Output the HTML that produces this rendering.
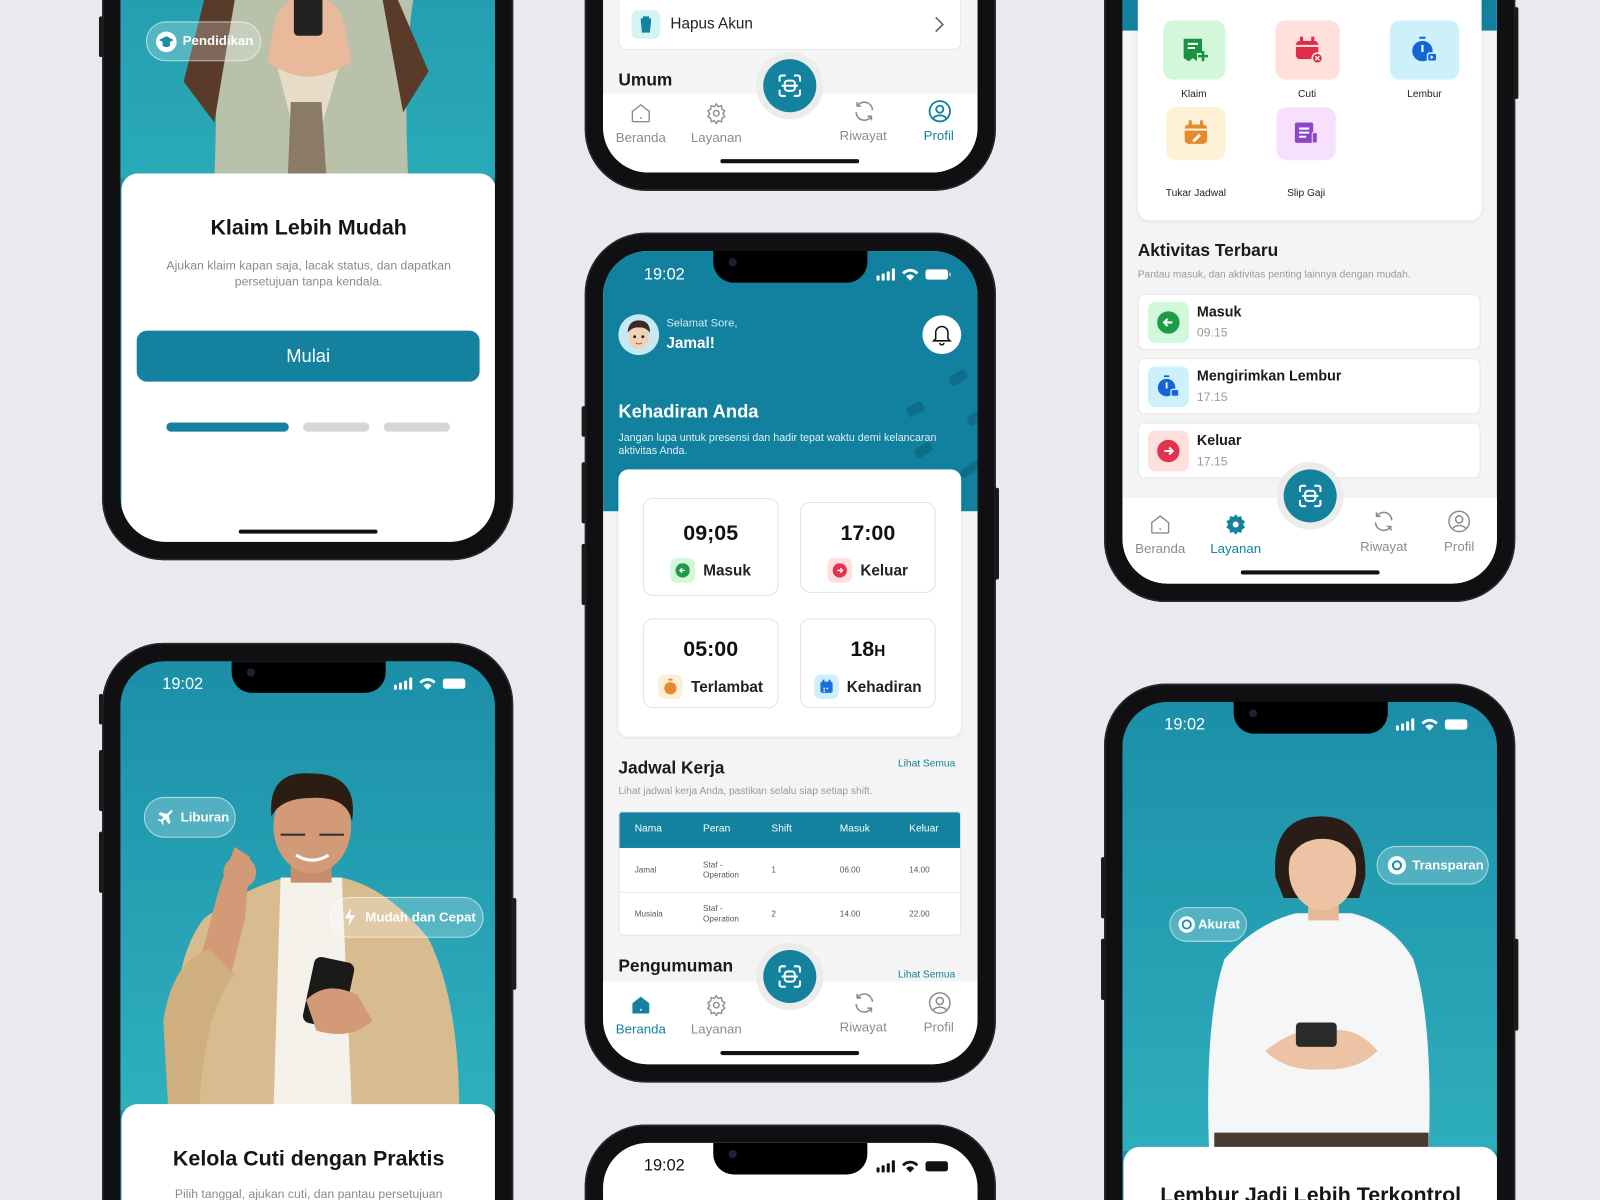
<!DOCTYPE html>
<html><head><meta charset="utf-8"><style>
*{margin:0;padding:0;box-sizing:border-box}
html,body{width:1600px;height:1200px;overflow:hidden;background:#e9eaed;font-family:"Liberation Sans",sans-serif}
#o{position:absolute;left:0;top:0;width:1600px;height:1200px;overflow:hidden}
#w{position:absolute;left:0;top:0;width:1568px;height:1176px;transform:scale(1.0204);transform-origin:0 0;overflow:hidden}
.ph{position:absolute;width:403px;height:833px;border-radius:60px;background:#101012;box-shadow:0 0 0 1.5px #2a2a2e inset}
.sc{position:absolute;left:18px;top:18px;width:367px;height:797px;border-radius:44px;overflow:hidden}
.g{position:absolute;width:1568px;height:1176px}
.a{position:absolute;white-space:nowrap}
.btn{position:absolute;width:4px;background:#1a1a1c;border-radius:2px}
.notch{position:absolute;height:31px;background:#000;border-radius:0 0 20px 20px}
.pill{position:absolute;border-radius:22px;background:rgba(255,255,255,.22);border:1.5px solid rgba(255,255,255,.55);color:#fff;font-weight:bold;font-size:13px}
.nav{position:absolute;font-size:13px;color:#8c8c8c;text-align:center;width:80px}
.fab{position:absolute;width:52px;height:52px;border-radius:50%;background:#14819f;box-shadow:0 0 0 7px #ececec}
.box{position:absolute;border:1px solid #e2e2e2;border-radius:10px;background:#fff;text-align:center}
.bt{font-weight:bold;font-size:21px;color:#111;margin-top:22px}
.bl{font-weight:bold;font-size:15px;color:#222;margin-top:12px;display:flex;align-items:center;justify-content:center;gap:8px}
.ic{width:24px;height:24px;border-radius:6px;display:inline-flex;align-items:center;justify-content:center}
.sq{position:absolute;border-radius:10px;display:flex;align-items:center;justify-content:center}
.lbl{position:absolute;font-size:10px;color:#222;text-align:center;width:100px}
.act{position:absolute;left:1115px;width:336px;height:55px;background:#fff;border:1px solid #e6e6e6;border-radius:7px}
.act .i{position:absolute;left:9px;top:7px;width:40px;height:40px;border-radius:7px;display:flex;align-items:center;justify-content:center}
.act .t1{position:absolute;left:57px;top:8px;font-weight:bold;font-size:14px;color:#1a1a1a}
.act .t2{position:absolute;left:57px;top:30px;font-size:12px;color:#9a9a9a}
</style></head><body><div id="o"><div id="w">

<!-- ============ PHONE 1 ============ -->
<div class="ph" style="left:100px;top:-284px"><div class="btn" style="left:-3px;top:300px;height:40px"></div><div class="sc" style="background:#1f98ab">
<div class="g" style="left:-118px;top:266px">
<svg class="a" style="left:118px;top:-266px" width="367" height="440" viewBox="118 -266 367 440">
<defs><linearGradient id="t1" x1="0" y1="0" x2="0" y2="1"><stop offset="0" stop-color="#1a8ea6"/><stop offset="1" stop-color="#2aaab8"/></linearGradient></defs>
<rect x="118" y="-266" width="367" height="440" fill="url(#t1)"/>
<path d="M205 0 Q215 60 210 175 L400 175 Q395 60 405 0Z" fill="#b9c1ab"/>
<path d="M265 40 L300 175 L340 40Z" fill="#e6dcc8"/>
<path d="M285 100 L315 100 L320 175 L282 175Z" fill="#8b7a66"/>
<path d="M200 0 L180 80 L210 120 L230 0Z" fill="#5a3b2a"/>
<path d="M390 0 L420 70 L395 110 L375 0Z" fill="#5a3b2a"/>
<ellipse cx="303" cy="30" rx="35" ry="35" fill="#e8b99a"/>
<rect x="288" y="-5" width="28" height="40" rx="4" fill="#222"/>
<path d="M268 30 Q300 70 338 30 L345 60 Q300 90 262 60Z" fill="#e8b99a"/>
</svg>
<div class="pill" style="left:143px;top:21px;width:113px;height:39px;line-height:36px;padding-left:35px">Pendidikan
<svg style="position:absolute;left:8px;top:8px" width="22" height="22" viewBox="0 0 24 24"><circle cx="12" cy="12" r="11" fill="#fff"/><path d="M4 10l8-4 8 4-8 4z M8 12v4c2 2 6 2 8 0v-4l-4 2z" fill="#1a8ea6"/></svg></div>
<div class="a" style="left:119px;top:170px;width:367px;height:400px;background:#fff;border-radius:16px 16px 0 0"></div>
<div class="a" style="left:119px;top:212px;width:367px;text-align:center;font-size:21px;font-weight:bold;color:#151515">Klaim Lebih Mudah</div>
<div class="a" style="left:140px;top:252px;width:325px;text-align:center;font-size:12px;line-height:16px;color:#8a8a8a;white-space:normal">Ajukan klaim kapan saja, lacak status, dan dapatkan persetujuan tanpa kendala.</div>
<div class="a" style="left:134px;top:324px;width:336px;height:50px;border-radius:10px;background:#14819f;color:#fff;font-size:18px;line-height:50px;text-align:center">Mulai</div>
<div class="a" style="left:163px;top:414px;width:120px;height:9px;border-radius:5px;background:#14819f"></div>
<div class="a" style="left:297px;top:414px;width:65px;height:9px;border-radius:5px;background:#d6d6d6"></div>
<div class="a" style="left:376px;top:414px;width:65px;height:9px;border-radius:5px;background:#d6d6d6"></div>
<div class="a" style="left:234px;top:519px;width:136px;height:4px;border-radius:2px;background:#111"></div>
</div></div></div>

<!-- ============ PHONE 2 ============ -->
<div class="ph" style="left:573px;top:-646px"><div class="sc" style="background:#f5f5f6">
<div class="g" style="left:-591px;top:628px">
<div class="a" style="left:606px;top:-10px;width:336px;height:59px;background:#fff;border:1px solid #e5e5e5;border-radius:8px"></div>
<div class="a" style="left:619px;top:10px;width:28px;height:28px;border-radius:6px;background:#d3f3f5"><svg width="28" height="28" viewBox="0 0 28 28"><path d="M9 9h10M12 9V7h4v2M10 11h8l-1 10h-6z" stroke="#14819f" stroke-width="2" fill="#14819f"/></svg></div>
<div class="a" style="left:657px;top:15px;font-size:15px;color:#222">Hapus Akun</div>
<svg class="a" style="left:912px;top:14px" width="16" height="20" viewBox="0 0 16 20"><path d="M5 3l7 7-7 7" stroke="#666" stroke-width="1.6" fill="none"/></svg>
<div class="a" style="left:606px;top:69px;font-size:17px;font-weight:bold;color:#1a1a1a">Umum</div>
<div class="a" style="left:591px;top:92px;width:367px;height:100px;background:#fff"></div>
<div class="fab" style="left:748px;top:58px"></div>
<svg class="a" style="left:761px;top:71px" width="26" height="26" viewBox="0 0 26 26" fill="none" stroke="#fff" stroke-width="2"><path d="M3 9V5a2 2 0 0 1 2-2h4M17 3h4a2 2 0 0 1 2 2v4M23 17v4a2 2 0 0 1-2 2h-4M9 23H5a2 2 0 0 1-2-2v-4"/><rect x="8" y="8" width="10" height="10" rx="3"/><path d="M5 13h16"/></svg>
<svg class="a" style="left:617px;top:100px" width="22" height="22" viewBox="0 0 24 24" fill="none" stroke="#8c8c8c" stroke-width="1.5"><path d="M3 10l9-7 9 7v10a1 1 0 0 1-1 1H4a1 1 0 0 1-1-1z"/><path d="M12 16v2"/></svg>
<div class="nav" style="left:588px;top:127px">Beranda</div>
<svg class="a" style="left:691px;top:100px" width="22" height="22" viewBox="0 0 24 24" fill="none" stroke="#8c8c8c" stroke-width="1.5"><circle cx="12" cy="12" r="3"/><path d="M12 2l2 3 3.5-1 .5 3.5 3 2-2 3 2 3-3 2-.5 3.5-3.5-1-2 3-2-3-3.5 1-.5-3.5-3-2 2-3-2-3 3-2 .5-3.5 3.5 1z"/></svg>
<div class="nav" style="left:662px;top:127px">Layanan</div>
<svg class="a" style="left:835px;top:97px" width="24" height="24" viewBox="0 0 24 24" fill="none" stroke="#8c8c8c" stroke-width="1.5"><path d="M20 11a8 8 0 0 0-14.5-4.5M4 13a8 8 0 0 0 14.5 4.5M5 3v4h4M19 21v-4h-4"/></svg>
<div class="nav" style="left:806px;top:125px">Riwayat</div>
<svg class="a" style="left:909px;top:97px" width="24" height="24" viewBox="0 0 24 24" fill="none" stroke="#14819f" stroke-width="1.8"><circle cx="12" cy="12" r="10"/><circle cx="12" cy="10" r="3.5"/><path d="M5.5 19c3-4 10-4 13 0"/></svg>
<div class="nav" style="left:880px;top:125px;color:#14819f">Profil</div>
<div class="a" style="left:706px;top:156px;width:136px;height:4px;border-radius:2px;background:#111"></div>
</div></div></div>

<!-- ============ PHONE 3 ============ -->
<div class="ph" style="left:573px;top:228px"><div class="btn" style="left:-3px;top:170px;height:30px"></div><div class="btn" style="left:-3px;top:225px;height:60px"></div><div class="btn" style="left:-3px;top:305px;height:60px"></div><div class="btn" style="right:-3px;top:250px;height:90px"></div>
<div class="sc" style="background:#f4f4f5">
<div class="g" style="left:-591px;top:-246px">
<div class="a" style="left:591px;top:246px;width:367px;height:255px;background:#12809f"></div>
<div class="a" style="left:930px;top:365px;width:18px;height:10px;border-radius:3px;background:#0e6d89;transform:rotate(-30deg)"></div>
<div class="a" style="left:888px;top:396px;width:18px;height:10px;border-radius:3px;background:#0e6d89;transform:rotate(-30deg)"></div>
<div class="a" style="left:948px;top:404px;width:18px;height:10px;border-radius:3px;background:#0e6d89;transform:rotate(-30deg)"></div>
<div class="a" style="left:896px;top:436px;width:18px;height:10px;border-radius:3px;background:#0e6d89;transform:rotate(-30deg)"></div>
<div class="a" style="left:940px;top:455px;width:24px;height:8px;border-radius:3px;background:#0e6d89;transform:rotate(-35deg)"></div>
<div class="notch" style="left:699px;top:246px;width:151px"></div>
<div class="a" style="left:714px;top:253px;width:8px;height:8px;border-radius:50%;background:#1b2233"></div>
<div class="a" style="left:631px;top:261px;font-size:16px;color:#fff">19:02</div>
<svg class="a" style="left:859px;top:262px" width="75" height="14" viewBox="0 0 75 14"><g fill="#fff"><rect x="0" y="8" width="3" height="5" rx="1"/><rect x="5" y="6" width="3" height="7" rx="1"/><rect x="10" y="4" width="3" height="9" rx="1"/><rect x="15" y="1" width="3" height="12" rx="1"/><path d="M25 5a11 11 0 0 1 16 0l-2 2a8 8 0 0 0-12 0zM29 9a5 5 0 0 1 8 0l-4 4z"/><rect x="48" y="2" width="22" height="10" rx="2.5"/><rect x="71" y="5" width="2" height="4" rx="1" opacity=".5"/></g></svg>
<div class="a" style="left:606px;top:308px;width:40px;height:40px;border-radius:50%;background:#c6e9f6"></div>
<svg class="a" style="left:612px;top:312px" width="28" height="34" viewBox="0 0 28 34"><ellipse cx="14" cy="18" rx="10" ry="12" fill="#f1d2b6"/><path d="M3 14Q4 2 14 2Q25 2 25 14Q20 8 14 9Q8 8 3 14" fill="#3a2a22"/><circle cx="10" cy="18" r="1.4" fill="#222"/><circle cx="18" cy="18" r="1.4" fill="#222"/><path d="M11 24q3 2 6 0" stroke="#a55" fill="none"/></svg>
<div class="a" style="left:653px;top:311px;font-size:11px;color:#d4ecf2">Selamat Sore,</div>
<div class="a" style="left:653px;top:328px;font-size:15px;font-weight:bold;color:#fff">Jamal!</div>
<div class="a" style="left:904px;top:309px;width:38px;height:38px;border-radius:50%;background:#fff"></div>
<svg class="a" style="left:913px;top:317px" width="20" height="22" viewBox="0 0 20 22" fill="none" stroke="#111" stroke-width="1.5"><path d="M4 15V9a6 6 0 0 1 12 0v6l2 2H2z"/><path d="M8 19a2 2 0 0 0 4 0"/></svg>
<div class="a" style="left:606px;top:393px;font-size:18px;font-weight:bold;color:#fff">Kehadiran Anda</div>
<div class="a" style="left:606px;top:423px;width:340px;font-size:10.5px;line-height:13px;color:#e3f1f5;white-space:normal">Jangan lupa untuk presensi dan hadir tepat waktu demi kelancaran aktivitas Anda.</div>
<div class="a" style="left:606px;top:460px;width:336px;height:262px;border-radius:10px;background:#fff;box-shadow:0 1px 3px rgba(0,0,0,.08)"></div>
<div class="box" style="left:630px;top:488px;width:133px;height:96px"><div class="bt">09;05</div><div class="bl"><span class="ic" style="background:#d3f7d9"><svg width="14" height="14" viewBox="0 0 14 14"><circle cx="7" cy="7" r="7" fill="#1c9b48"/><path d="M9.5 7h-5M6.5 4.8L4.3 7l2.2 2.2" stroke="#fff" stroke-width="1.3" fill="none"/></svg></span>Masuk</div></div>
<div class="box" style="left:784px;top:492px;width:133px;height:89px"><div class="bt" style="margin-top:18px">17:00</div><div class="bl"><span class="ic" style="background:#fde0dc"><svg width="14" height="14" viewBox="0 0 14 14"><circle cx="7" cy="7" r="7" fill="#e1324e"/><path d="M4.5 7h5M7.5 4.8L9.7 7 7.5 9.2" stroke="#fff" stroke-width="1.3" fill="none"/></svg></span>Keluar</div></div>
<div class="box" style="left:630px;top:606px;width:133px;height:88px"><div class="bt" style="margin-top:18px">05:00</div><div class="bl"><span class="ic" style="background:#fdefd6"><svg width="14" height="16" viewBox="0 0 14 16"><rect x="5" y="0" width="4" height="2" fill="#e48a2f"/><circle cx="7" cy="9.5" r="6" fill="#e48a2f"/></svg></span>Terlambat</div></div>
<div class="box" style="left:784px;top:606px;width:133px;height:88px"><div class="bt" style="margin-top:18px">18<span style="font-size:15px">H</span></div><div class="bl"><span class="ic" style="background:#cdeffc"><svg width="14" height="14" viewBox="0 0 14 14"><rect x="1" y="2" width="12" height="11" rx="2" fill="#1d6fde"/><rect x="3" y="0" width="2" height="4" fill="#1d6fde"/><rect x="9" y="0" width="2" height="4" fill="#1d6fde"/><rect x="4" y="8" width="1.5" height="1.5" fill="#fff"/><rect x="4" y="10.5" width="1.5" height="1.5" fill="#fff"/><rect x="7" y="8" width="1.5" height="1.5" fill="#fff"/></svg></span>Kehadiran</div></div>
<div class="a" style="left:606px;top:743px;font-size:17px;font-weight:bold;color:#1a1a1a">Jadwal Kerja</div>
<div class="a" style="left:880px;top:743px;font-size:10px;color:#14819f">Lihat Semua</div>
<div class="a" style="left:606px;top:770px;font-size:10px;color:#9a9a9a">Lihat jadwal kerja Anda, pastikan selalu siap setiap shift.</div>
<div class="a" style="left:606px;top:795px;width:336px;height:122px;background:#fff;border:1px solid #e3e3e3;border-radius:4px;overflow:hidden">
<div style="height:35px;background:#14819f"></div>
<div style="position:absolute;top:78px;left:0;right:0;border-top:1px solid #ececec"></div></div>
<div class="a" style="left:622px;top:807px;font-size:10px;color:#fff">Nama</div>
<div class="a" style="left:689px;top:807px;font-size:10px;color:#fff">Peran</div>
<div class="a" style="left:756px;top:807px;font-size:10px;color:#fff">Shift</div>
<div class="a" style="left:823px;top:807px;font-size:10px;color:#fff">Masuk</div>
<div class="a" style="left:891px;top:807px;font-size:10px;color:#fff">Keluar</div>
<div class="a" style="left:622px;top:848px;font-size:8px;color:#555">Jamal</div>
<div class="a" style="left:689px;top:843px;font-size:8px;line-height:10px;color:#555">Staf -<br>Operation</div>
<div class="a" style="left:756px;top:848px;font-size:8px;color:#555">1</div>
<div class="a" style="left:823px;top:848px;font-size:8px;color:#555">06.00</div>
<div class="a" style="left:891px;top:848px;font-size:8px;color:#555">14.00</div>
<div class="a" style="left:622px;top:891px;font-size:8px;color:#555">Musiala</div>
<div class="a" style="left:689px;top:886px;font-size:8px;line-height:10px;color:#555">Staf -<br>Operation</div>
<div class="a" style="left:756px;top:891px;font-size:8px;color:#555">2</div>
<div class="a" style="left:823px;top:891px;font-size:8px;color:#555">14.00</div>
<div class="a" style="left:891px;top:891px;font-size:8px;color:#555">22.00</div>
<div class="a" style="left:606px;top:937px;font-size:17px;font-weight:bold;color:#1a1a1a">Pengumuman</div>
<div class="a" style="left:880px;top:950px;font-size:10px;color:#14819f">Lihat Semua</div>
<div class="a" style="left:591px;top:962px;width:367px;height:100px;background:#fff"></div>
<div class="fab" style="left:748px;top:931px"></div>
<svg class="a" style="left:761px;top:944px" width="26" height="26" viewBox="0 0 26 26" fill="none" stroke="#fff" stroke-width="2"><path d="M3 9V5a2 2 0 0 1 2-2h4M17 3h4a2 2 0 0 1 2 2v4M23 17v4a2 2 0 0 1-2 2h-4M9 23H5a2 2 0 0 1-2-2v-4"/><rect x="8" y="8" width="10" height="10" rx="3"/><path d="M5 13h16"/></svg>
<svg class="a" style="left:617px;top:974px" width="22" height="22" viewBox="0 0 24 24"><path d="M3 10l9-7 9 7v10a1 1 0 0 1-1 1H4a1 1 0 0 1-1-1z" fill="#14819f"/><path d="M12 16v2" stroke="#fff" stroke-width="1.5"/></svg>
<div class="nav" style="left:588px;top:1001px;color:#14819f">Beranda</div>
<svg class="a" style="left:691px;top:974px" width="22" height="22" viewBox="0 0 24 24" fill="none" stroke="#8c8c8c" stroke-width="1.5"><circle cx="12" cy="12" r="3"/><path d="M12 2l2 3 3.5-1 .5 3.5 3 2-2 3 2 3-3 2-.5 3.5-3.5-1-2 3-2-3-3.5 1-.5-3.5-3-2 2-3-2-3 3-2 .5-3.5 3.5 1z"/></svg>
<div class="nav" style="left:662px;top:1001px">Layanan</div>
<svg class="a" style="left:835px;top:971px" width="24" height="24" viewBox="0 0 24 24" fill="none" stroke="#8c8c8c" stroke-width="1.5"><path d="M20 11a8 8 0 0 0-14.5-4.5M4 13a8 8 0 0 0 14.5 4.5M5 3v4h4M19 21v-4h-4"/></svg>
<div class="nav" style="left:806px;top:999px">Riwayat</div>
<svg class="a" style="left:909px;top:971px" width="24" height="24" viewBox="0 0 24 24" fill="none" stroke="#8c8c8c" stroke-width="1.5"><circle cx="12" cy="12" r="10"/><circle cx="12" cy="10" r="3.5"/><path d="M5.5 19c3-4 10-4 13 0"/></svg>
<div class="nav" style="left:880px;top:999px">Profil</div>
<div class="a" style="left:706px;top:1030px;width:136px;height:4px;border-radius:2px;background:#111"></div>
</div></div></div>

<!-- ============ PHONE 4 ============ -->
<div class="ph" style="left:573px;top:1102px"><div class="sc" style="background:#fff">
<div class="g" style="left:-591px;top:-1120px">
<div class="notch" style="left:699px;top:1120px;width:151px"></div>
<div class="a" style="left:714px;top:1127px;width:8px;height:8px;border-radius:50%;background:#1b2233"></div>
<div class="a" style="left:631px;top:1134px;font-size:16px;color:#111">19:02</div>
<svg class="a" style="left:859px;top:1136px" width="75" height="14" viewBox="0 0 75 14"><g fill="#111"><rect x="0" y="8" width="3" height="5" rx="1"/><rect x="5" y="6" width="3" height="7" rx="1"/><rect x="10" y="4" width="3" height="9" rx="1"/><rect x="15" y="1" width="3" height="12" rx="1"/><path d="M25 5a11 11 0 0 1 16 0l-2 2a8 8 0 0 0-12 0zM29 9a5 5 0 0 1 8 0l-4 4z"/><rect x="48" y="2" width="22" height="10" rx="2.5"/></g></svg>
</div></div></div>

<!-- ============ PHONE 5 ============ -->
<div class="ph" style="left:1082px;top:-243px"><div class="btn" style="right:-3px;top:250px;height:90px"></div><div class="sc" style="background:#f4f4f5">
<div class="g" style="left:-1100px;top:225px">
<div class="a" style="left:1100px;top:-225px;width:367px;height:255px;background:#12809f"></div>
<div class="a" style="left:1115px;top:-10px;width:337px;height:226px;background:#fff;border-radius:12px;box-shadow:0 1px 4px rgba(0,0,0,.08)"></div>
<div class="sq" style="left:1140px;top:20px;width:61px;height:58px;background:#d3f7d9"><svg width="28" height="28" viewBox="0 0 28 28"><path d="M3 3h18v14l-5 0v8l-4-3-4 3-5-3z" fill="#1b9144"/><path d="M7 8h10M7 12h7" stroke="#fff" stroke-width="2"/><path d="M22 15v10M17 20h10" stroke="#1b9144" stroke-width="2.5"/></svg></div>
<div class="sq" style="left:1250px;top:20px;width:63px;height:58px;background:#fde1da"><svg width="30" height="28" viewBox="0 0 30 28"><rect x="3" y="5" width="22" height="18" rx="4" fill="#dd2d4a"/><rect x="7" y="1" width="3" height="6" fill="#dd2d4a"/><rect x="18" y="1" width="3" height="6" fill="#dd2d4a"/><rect x="3" y="9" width="22" height="2" fill="#fde1da"/><circle cx="24" cy="22" r="5" fill="#dd2d4a" stroke="#fde1da" stroke-width="1.5"/><path d="M22 20l4 4M26 20l-4 4" stroke="#fff" stroke-width="1.3"/></svg></div>
<div class="sq" style="left:1362px;top:20px;width:68px;height:58px;background:#cdf1fb"><svg width="28" height="28" viewBox="0 0 28 28"><rect x="9" y="1" width="6" height="2" fill="#1464d2"/><circle cx="12" cy="15" r="10" fill="#1464d2"/><rect x="11" y="9" width="2" height="7" fill="#fff"/><rect x="17" y="17" width="9" height="8" rx="2" fill="#1464d2" stroke="#cdf1fb" stroke-width="1.5"/><path d="M20 19l3 2-3 2z" fill="#fff"/></svg></div>
<div class="lbl" style="left:1120px;top:87px">Klaim</div>
<div class="lbl" style="left:1231px;top:87px">Cuti</div>
<div class="lbl" style="left:1346px;top:87px">Lembur</div>
<div class="sq" style="left:1143px;top:105px;width:58px;height:52px;background:#fdf0d5"><svg width="28" height="28" viewBox="0 0 28 28"><rect x="3" y="5" width="22" height="19" rx="4" fill="#e48a2f"/><rect x="7" y="1" width="3" height="6" fill="#e48a2f"/><rect x="18" y="1" width="3" height="6" fill="#e48a2f"/><rect x="3" y="9" width="22" height="2" fill="#fdf0d5"/><path d="M11 20l6-6 2 2-6 6h-2z" fill="#fff"/></svg></div>
<div class="sq" style="left:1251px;top:105px;width:58px;height:52px;background:#f6e0fb"><svg width="28" height="28" viewBox="0 0 28 28"><rect x="3" y="3" width="18" height="20" rx="2" fill="#8e45c9"/><path d="M7 9h10M7 13h10M7 17h7" stroke="#fff" stroke-width="2"/><rect x="20" y="13" width="5" height="10" rx="1" fill="#8e45c9" stroke="#f6e0fb"/></svg></div>
<div class="lbl" style="left:1122px;top:184px">Tukar Jadwal</div>
<div class="lbl" style="left:1230px;top:184px">Slip Gaji</div>
<div class="a" style="left:1115px;top:236px;font-size:17px;font-weight:bold;color:#1a1a1a">Aktivitas Terbaru</div>
<div class="a" style="left:1115px;top:264px;font-size:10px;color:#9a9a9a">Pantau masuk, dan aktivitas penting lainnya dengan mudah.</div>
<div class="act" style="top:288px"><div class="i" style="background:#d3f7d9"><svg width="22" height="22" viewBox="0 0 14 14"><circle cx="7" cy="7" r="7" fill="#1c9b48"/><path d="M9.5 7h-5M6.5 4.8L4.3 7l2.2 2.2" stroke="#fff" stroke-width="1.3" fill="none"/></svg></div><div class="t1">Masuk</div><div class="t2">09.15</div></div>
<div class="act" style="top:351px"><div class="i" style="background:#cdf1fb"><svg width="24" height="24" viewBox="0 0 28 28"><rect x="9" y="1" width="6" height="2" fill="#1464d2"/><circle cx="12" cy="15" r="10" fill="#1464d2"/><rect x="11" y="9" width="2" height="7" fill="#fff"/><rect x="17" y="17" width="9" height="8" rx="2" fill="#1464d2" stroke="#cdf1fb" stroke-width="1.5"/></svg></div><div class="t1">Mengirimkan Lembur</div><div class="t2">17.15</div></div>
<div class="act" style="top:414px"><div class="i" style="background:#fde0dc"><svg width="22" height="22" viewBox="0 0 14 14"><circle cx="7" cy="7" r="7" fill="#e1324e"/><path d="M4.5 7h5M7.5 4.8L9.7 7 7.5 9.2" stroke="#fff" stroke-width="1.3" fill="none"/></svg></div><div class="t1">Keluar</div><div class="t2">17.15</div></div>
<div class="a" style="left:1100px;top:488px;width:367px;height:100px;background:#fff"></div>
<div class="fab" style="left:1258px;top:460px"></div>
<svg class="a" style="left:1271px;top:473px" width="26" height="26" viewBox="0 0 26 26" fill="none" stroke="#fff" stroke-width="2"><path d="M3 9V5a2 2 0 0 1 2-2h4M17 3h4a2 2 0 0 1 2 2v4M23 17v4a2 2 0 0 1-2 2h-4M9 23H5a2 2 0 0 1-2-2v-4"/><rect x="8" y="8" width="10" height="10" rx="3"/><path d="M5 13h16"/></svg>
<svg class="a" style="left:1126px;top:503px" width="22" height="22" viewBox="0 0 24 24" fill="none" stroke="#8c8c8c" stroke-width="1.5"><path d="M3 10l9-7 9 7v10a1 1 0 0 1-1 1H4a1 1 0 0 1-1-1z"/><path d="M12 16v2"/></svg>
<div class="nav" style="left:1097px;top:530px">Beranda</div>
<svg class="a" style="left:1200px;top:503px" width="22" height="22" viewBox="0 0 24 24"><path d="M12 1l2.3 3 3.7-1 .7 3.7 3.3 2-2 3.3 2 3.3-3.3 2-.7 3.7-3.7-1L12 23l-2.3-3-3.7 1-.7-3.7-3.3-2 2-3.3-2-3.3 3.3-2 .7-3.7 3.7 1z" fill="#14819f"/><circle cx="12" cy="12" r="3.2" fill="#fff"/></svg>
<div class="nav" style="left:1171px;top:530px;color:#14819f">Layanan</div>
<svg class="a" style="left:1344px;top:499px" width="24" height="24" viewBox="0 0 24 24" fill="none" stroke="#8c8c8c" stroke-width="1.5"><path d="M20 11a8 8 0 0 0-14.5-4.5M4 13a8 8 0 0 0 14.5 4.5M5 3v4h4M19 21v-4h-4"/></svg>
<div class="nav" style="left:1316px;top:528px">Riwayat</div>
<svg class="a" style="left:1418px;top:499px" width="24" height="24" viewBox="0 0 24 24" fill="none" stroke="#8c8c8c" stroke-width="1.5"><circle cx="12" cy="12" r="10"/><circle cx="12" cy="10" r="3.5"/><path d="M5.5 19c3-4 10-4 13 0"/></svg>
<div class="nav" style="left:1390px;top:528px">Profil</div>
<div class="a" style="left:1216px;top:559px;width:136px;height:4px;border-radius:2px;background:#111"></div>
</div></div></div>

<!-- ============ PHONE 6 ============ -->
<div class="ph" style="left:100px;top:630px"><div class="btn" style="left:-3px;top:50px;height:30px"></div><div class="btn" style="left:-3px;top:105px;height:60px"></div><div class="btn" style="left:-3px;top:185px;height:60px"></div><div class="btn" style="right:-3px;top:250px;height:90px"></div>
<div class="sc" style="background:#1d95aa">
<div class="g" style="left:-118px;top:-648px">
<svg class="a" style="left:118px;top:648px" width="367" height="440" viewBox="118 648 367 440">
<defs><linearGradient id="t6" x1="0" y1="0" x2="0" y2="1"><stop offset="0" stop-color="#1b8fa8"/><stop offset="1" stop-color="#2fb0bd"/></linearGradient></defs>
<rect x="118" y="648" width="367" height="440" fill="url(#t6)"/>
<path d="M175 1090 Q160 950 200 900 Q240 870 280 860 L335 860 Q380 870 420 920 Q450 980 450 1090Z" fill="#d9bb90"/>
<path d="M275 860 L335 860 L345 1090 L268 1090Z" fill="#f3f1ea"/>
<rect x="285" y="830" width="40" height="35" fill="#c98d6b"/>
<ellipse cx="306" cy="810" rx="38" ry="46" fill="#d29a76"/>
<path d="M266 800 Q262 755 305 758 Q352 758 345 805 Q340 780 305 782 Q275 782 266 800Z" fill="#2b1c14"/>
<path d="M275 818 h24 M313 818 h24" stroke="#333" stroke-width="2"/>
<path d="M290 838 q16 10 32 0" stroke="#fff" stroke-width="3" fill="none"/>
<path d="M195 945 L215 870 L230 830 L245 840 L240 900 L225 960Z" fill="#d29a76"/>
<circle cx="235" cy="855" r="16" fill="#d29a76"/>
<path d="M160 1000 Q170 940 205 930 L230 955 Q200 990 195 1090 L165 1090Z" fill="#cfae80"/>
<rect x="302" y="940" width="40" height="66" rx="7" fill="#1a1a1a" transform="rotate(12 322 973)"/>
<path d="M300 980 Q320 960 350 975 L365 1000 Q345 1020 310 1010Z" fill="#d29a76"/>
</svg>
<div class="notch" style="left:227px;top:648px;width:151px"></div>
<div class="a" style="left:242px;top:655px;width:8px;height:8px;border-radius:50%;background:#1b2233"></div>
<div class="a" style="left:159px;top:662px;font-size:16px;color:#fff">19:02</div>
<svg class="a" style="left:386px;top:663px" width="75" height="14" viewBox="0 0 75 14"><g fill="#fff"><rect x="0" y="8" width="3" height="5" rx="1"/><rect x="5" y="6" width="3" height="7" rx="1"/><rect x="10" y="4" width="3" height="9" rx="1"/><rect x="15" y="1" width="3" height="12" rx="1"/><path d="M25 5a11 11 0 0 1 16 0l-2 2a8 8 0 0 0-12 0zM29 9a5 5 0 0 1 8 0l-4 4z"/><rect x="48" y="2" width="22" height="10" rx="2.5"/></g></svg>
<div class="pill" style="left:141px;top:781px;width:90px;height:40px;line-height:37px;padding-left:35px">Liburan
<svg style="position:absolute;left:9px;top:9px" width="22" height="20" viewBox="0 0 24 24"><path d="M21 4c-1-1-3 0-4 1l-3 3-8-2-2 2 6 4-3 3-3-1-1 1 4 2 2 4 1-1-1-3 3-3 4 6 2-2-2-8 3-3c1-1 2-3 1-4z" fill="#fff"/></svg></div>
<div class="pill" style="left:323px;top:879px;width:151px;height:40px;line-height:37px;padding-left:34px">Mudah dan Cepat
<svg style="position:absolute;left:12px;top:10px" width="14" height="18" viewBox="0 0 14 18"><path d="M8 0L2 10h5l-2 8 7-11H7z" fill="#fff"/></svg></div>
<div class="a" style="left:119px;top:1082px;width:367px;height:200px;background:#fff;border-radius:16px 16px 0 0"></div>
<div class="a" style="left:119px;top:1124px;width:367px;text-align:center;font-size:21px;font-weight:bold;color:#151515">Kelola Cuti dengan Praktis</div>
<div class="a" style="left:119px;top:1163px;width:367px;text-align:center;font-size:12px;color:#8a8a8a">Pilih tanggal, ajukan cuti, dan pantau persetujuan</div>
</div></div></div>

<!-- ============ PHONE 7 ============ -->
<div class="ph" style="left:1082px;top:670px"><div class="btn" style="left:-3px;top:170px;height:60px"></div><div class="btn" style="left:-3px;top:250px;height:60px"></div><div class="btn" style="right:-3px;top:250px;height:90px"></div>
<div class="sc" style="background:#1d95aa">
<div class="g" style="left:-1100px;top:-688px">
<svg class="a" style="left:1100px;top:688px" width="367" height="440" viewBox="1100 688 367 440">
<defs><linearGradient id="t7" x1="0" y1="0" x2="0" y2="1"><stop offset="0" stop-color="#1b8fa8"/><stop offset="1" stop-color="#2eaebc"/></linearGradient></defs>
<rect x="1100" y="688" width="367" height="440" fill="url(#t7)"/>
<path d="M1185 1130 Q1180 1000 1200 940 Q1230 905 1270 895 L1325 895 Q1365 905 1385 940 Q1405 1000 1400 1130Z" fill="#f5f6f7"/>
<rect x="1282" y="870" width="30" height="32" fill="#e5b998"/>
<path d="M1250 860 Q1245 800 1295 800 Q1340 800 1338 860 L1332 880 L1258 880Z" fill="#2a1d18"/>
<ellipse cx="1296" cy="852" rx="33" ry="40" fill="#ecc4a5"/>
<path d="M1262 845 Q1262 808 1296 810 Q1330 808 1330 845 Q1320 822 1296 822 Q1272 822 1262 845Z" fill="#2a1d18"/>
<path d="M1190 1110 h210 v15 h-210z" fill="#4a3a30"/>
<path d="M1240 1030 Q1270 1005 1300 1010 Q1330 1005 1350 1030 Q1330 1050 1295 1048 Q1260 1050 1240 1030Z" fill="#ecc4a5"/>
<rect x="1270" y="1002" width="40" height="24" rx="4" fill="#2a2a2a"/>
</svg>
<div class="notch" style="left:1209px;top:688px;width:151px"></div>
<div class="a" style="left:1224px;top:695px;width:8px;height:8px;border-radius:50%;background:#1b2233"></div>
<div class="a" style="left:1141px;top:702px;font-size:16px;color:#fff">19:02</div>
<svg class="a" style="left:1368px;top:703px" width="75" height="14" viewBox="0 0 75 14"><g fill="#fff"><rect x="0" y="8" width="3" height="5" rx="1"/><rect x="5" y="6" width="3" height="7" rx="1"/><rect x="10" y="4" width="3" height="9" rx="1"/><rect x="15" y="1" width="3" height="12" rx="1"/><path d="M25 5a11 11 0 0 1 16 0l-2 2a8 8 0 0 0-12 0zM29 9a5 5 0 0 1 8 0l-4 4z"/><rect x="48" y="2" width="22" height="10" rx="2.5"/></g></svg>
<div class="pill" style="left:1349px;top:829px;width:110px;height:38px;line-height:35px;padding-left:34px">Transparan
<svg style="position:absolute;left:9px;top:8px" width="20" height="20" viewBox="0 0 20 20"><circle cx="10" cy="10" r="9" fill="#fff"/><circle cx="10" cy="10" r="4" fill="none" stroke="#1b8fa8" stroke-width="2"/></svg></div>
<div class="pill" style="left:1146px;top:889px;width:76px;height:34px;line-height:31px;padding-left:27px">Akurat
<svg style="position:absolute;left:7px;top:7px" width="18" height="18" viewBox="0 0 20 20"><circle cx="10" cy="10" r="9" fill="#fff"/><circle cx="10" cy="10" r="4.5" fill="none" stroke="#1b8fa8" stroke-width="2"/></svg></div>
<div class="a" style="left:1101px;top:1124px;width:367px;height:200px;background:#fff;border-radius:16px 16px 0 0"></div>
<div class="a" style="left:1101px;top:1160px;width:367px;text-align:center;font-size:21px;font-weight:bold;color:#151515">Lembur Jadi Lebih Terkontrol</div>
</div></div></div>

</div></div></body></html>
